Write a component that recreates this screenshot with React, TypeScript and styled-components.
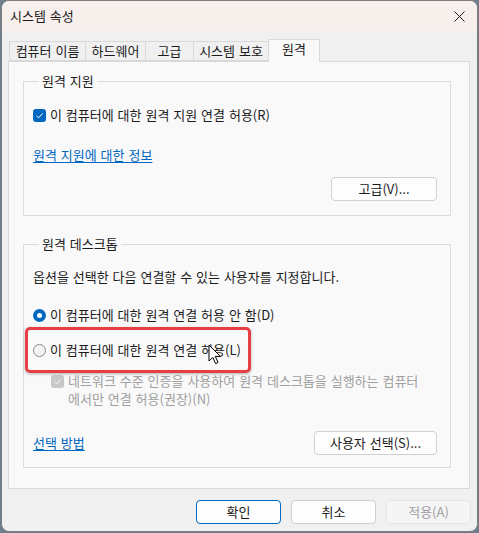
import React from 'react';
import styled, { createGlobalStyle } from 'styled-components';

const GlobalStyle = createGlobalStyle`
  html, body {
    margin: 0;
    padding: 0;
    background: #6d7f8c;
  }
  body {
    font-family: "Noto Sans CJK KR", "Malgun Gothic", sans-serif;
    font-size: 13px;
    word-spacing: 1px;
    color: #1b1b1b;
  }
`;

const Window = styled.div`
  position: relative;
  box-sizing: border-box;
  width: 477px;
  height: 532px;
  margin-left: 1px;
  border: 1px solid #7d7d7d;
  border-radius: 8px;
  background: #f0f0f0;
  overflow: hidden;
  display: flex;
  flex-direction: column;
`;

const TitleBar = styled.div`
  height: 30px;
  flex: none;
  display: flex;
  align-items: center;
  justify-content: space-between;
  padding: 0 8px 0 8px;
  background: #f6efec;
  line-height: 16px;
`;

const CloseButton = styled.button`
  width: 24px;
  height: 24px;
  display: flex;
  align-items: center;
  justify-content: center;
  border: none;
  background: transparent;
  padding: 0;
  margin-right: -2px;
`;

const Body = styled.div`
  flex: 1;
  display: flex;
  flex-direction: column;
  padding: 8px 7px 0 6px;
`;

const TabRow = styled.div`
  display: flex;
  align-items: flex-end;
  height: 22px;
  padding-left: 1px;
`;

const Tab = styled.div<{ $w: number; $active?: boolean }>`
  box-sizing: border-box;
  width: ${(p) => p.$w}px;
  height: ${(p) => (p.$active ? 23 : 20)}px;
  margin-right: -1px;
  margin-bottom: ${(p) => (p.$active ? -1 : 0)}px;
  border: 1px solid #d9d9d9;
  border-bottom: ${(p) => (p.$active ? 'none' : '1px solid #d9d9d9')};
  background: ${(p) => (p.$active ? '#f9f9f9' : '#f0f0f0')};
  position: relative;
  z-index: ${(p) => (p.$active ? 1 : 0)};
  display: flex;
  justify-content: center;
  padding-top: 1px;
  line-height: 16px;
  white-space: nowrap;
`;

const Panel = styled.div`
  border: 1px solid #d9d9d9;
  background: #f9f9f9;
  padding: 11px 18px 20px 14px;
  display: flex;
  flex-direction: column;
  gap: 20px;
`;

const Group = styled.fieldset`
  margin: 0;
  padding: 0 13px 0 9px;
  min-width: 0;
  border: 1px solid #dcdcdc;
  display: flex;
  flex-direction: column;
`;

const Legend = styled.legend`
  margin-left: 6px;
  padding: 0 3px;
  line-height: 16px;
  font-size: 13px;
`;

const Row = styled.div<{ $mt: number }>`
  margin-top: ${(p) => p.$mt}px;
  display: flex;
  align-items: center;
  height: 16px;
  line-height: 16px;
  white-space: nowrap;
`;

const Spacer = styled.div<{ $h: number }>`
  height: ${(p) => p.$h}px;
  flex: none;
`;

const Box = styled.span<{ $disabled?: boolean }>`
  box-sizing: border-box;
  width: 13px;
  height: 13px;
  border-radius: 3px;
  background: ${(p) => (p.$disabled ? '#c8c8c8' : '#0067c0')};
  display: inline-flex;
  align-items: center;
  justify-content: center;
  margin-right: 4px;
  margin-top: ${(p) => (p.$disabled ? 3 : 0)}px;
  flex: none;
`;

const Radio = styled.span<{ $on?: boolean }>`
  box-sizing: border-box;
  width: 13px;
  height: 13px;
  border-radius: 50%;
  flex: none;
  margin-right: 4px;
  background: ${(p) => (p.$on ? '#ffffff' : '#f3f3f3')};
  border: ${(p) => (p.$on ? '4px solid #0067c0' : '1px solid #8b8b8b')};
`;

const Link = styled.a`
  color: #0067c0;
  text-decoration: underline;
  text-underline-offset: 2px;
  line-height: 16px;
  cursor: pointer;
`;

const LinkRow = styled.div<{ $mt: number }>`
  margin-top: ${(p) => p.$mt}px;
  height: 16px;
  line-height: 16px;
`;

const ButtonRow = styled.div<{ $mt: number }>`
  margin-top: ${(p) => p.$mt}px;
  display: flex;
  align-items: center;
  justify-content: space-between;
`;

const Button = styled.button<{ $w: number; $primary?: boolean }>`
  box-sizing: border-box;
  width: ${(p) => p.$w}px;
  height: 24px;
  border-radius: 4px;
  border: 1px solid ${(p) => (p.$primary ? '#0067c0' : '#d0d0d0')};
  background: #fdfdfd;
  font-family: inherit;
  font-size: 13px;
  word-spacing: 1px;
  line-height: 16px;
  color: #1b1b1b;
  padding: 0;
  &:disabled {
    background: #f5f5f5;
    border-color: #e5e5e5;
    color: #9d9d9d;
  }
`;

const SubOption = styled.div`
  margin-top: 14px;
  margin-left: 18px;
  display: flex;
  align-items: flex-start;
  color: #a0a0a0;
  line-height: 18px;
`;

const SubText = styled.div`
  white-space: nowrap;
`;

const Footer = styled.div`
  display: flex;
  justify-content: flex-end;
  gap: 10px;
  margin-top: 11px;
  margin-right: -1px;
`;

const Highlight = styled.div`
  position: absolute;
  left: 23px;
  top: 326px;
  width: 226px;
  height: 46px;
  box-sizing: border-box;
  border: 3px solid #e53e44;
  border-radius: 5px;
  box-shadow: 0 1px 3px rgba(0, 0, 0, 0.3);
  pointer-events: none;
`;

const Cursor = styled.svg`
  position: absolute;
  left: 206px;
  top: 343px;
`;

const Check = ({ color = '#ffffff' }: { color?: string }) => (
  <svg width="9" height="9" viewBox="0 0 9 9">
    <path d="M1.5 4.8 L3.6 6.8 L7.6 2.4" fill="none" stroke={color} strokeWidth="1" />
  </svg>
);

export default function App() {
  return (
    <>
      <GlobalStyle />
      <Window>
        <TitleBar>
          <span>시스템 속성</span>
          <CloseButton aria-label="닫기">
            <svg width="11" height="11" viewBox="0 0 11 11">
              <path d="M0.5 0.5 L10.5 10.5 M10.5 0.5 L0.5 10.5" stroke="#1b1b1b" strokeWidth="1" />
            </svg>
          </CloseButton>
        </TitleBar>
        <Body>
          <TabRow>
            <Tab $w={77}>컴퓨터 이름</Tab>
            <Tab $w={61}>하드웨어</Tab>
            <Tab $w={49}>고급</Tab>
            <Tab $w={76}>시스템 보호</Tab>
            <Tab $w={52} $active>
              원격
            </Tab>
          </TabRow>
          <Panel>
            <Group>
              <Legend>원격 지원</Legend>
              <Row $mt={18}>
                <Box>
                  <Check />
                </Box>
                이 컴퓨터에 대한 원격 지원 연결 허용(R)
              </Row>
              <LinkRow $mt={24}>
                <Link>원격 지원에 대한 정보</Link>
              </LinkRow>
              <ButtonRow $mt={14}>
                <span />
                <Button $w={106}>고급(V)...</Button>
              </ButtonRow>
              <Spacer $h={14} />
            </Group>
            <Group>
              <Legend>원격 데스크톱</Legend>
              <Row $mt={17}>옵션을 선택한 다음 연결할 수 있는 사용자를 지정합니다.</Row>
              <Row $mt={22}>
                <Radio $on />
                이 컴퓨터에 대한 원격 연결 허용 안 함(D)
              </Row>
              <Row $mt={19}>
                <Radio />
                이 컴퓨터에 대한 원격 연결 허용(L)
              </Row>
              <SubOption>
                <Box $disabled>
                  <Check />
                </Box>
                <SubText>
                  네트워크 수준 인증을 사용하여 원격 데스크톱을 실행하는 컴퓨터
                  <br />
                  에서만 연결 허용(권장)(N)
                </SubText>
              </SubOption>
              <ButtonRow $mt={23}>
                <Link>선택 방법</Link>
                <Button $w={123}>사용자 선택(S)...</Button>
              </ButtonRow>
              <Spacer $h={12} />
            </Group>
          </Panel>
          <Footer>
            <Button $w={85} $primary>
              확인
            </Button>
            <Button $w={85}>취소</Button>
            <Button $w={85} disabled>
              적용(A)
            </Button>
          </Footer>
        </Body>
        <Highlight />
        <Cursor width="14" height="22" viewBox="0 0 14 22">
          <path
            d="M1 1 L1 17 L4.8 13.4 L7.6 19.6 L10 18.5 L7.3 12.4 L12.4 12.4 Z"
            fill="#ffffff"
            stroke="#000000"
            strokeWidth="1"
            strokeLinejoin="round"
          />
        </Cursor>
      </Window>
    </>
  );
}
